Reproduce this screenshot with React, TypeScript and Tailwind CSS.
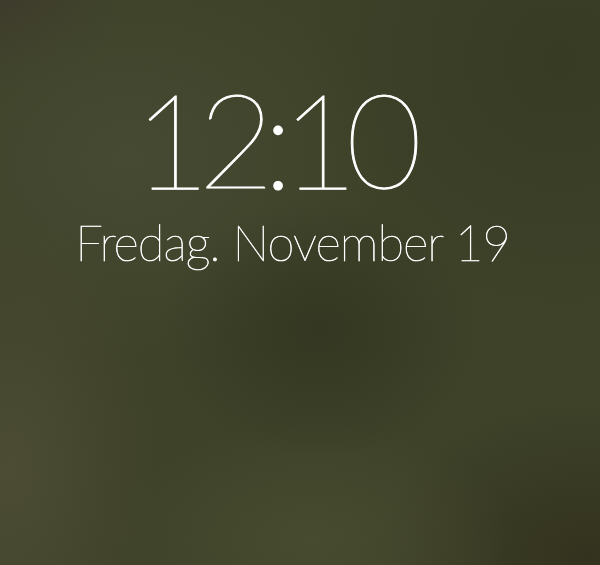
export default function App() {
  return (
    <div
      className="relative w-[600px] h-[565px] overflow-hidden bg-[#3e4229] bg-[radial-gradient(ellipse_160px_130px_at_320px_330px,#343721_0%,transparent_100%),radial-gradient(ellipse_150px_260px_at_10px_470px,#4b4c33_0%,transparent_100%),radial-gradient(ellipse_200px_120px_at_310px_540px,#474b2f_0%,transparent_100%),radial-gradient(ellipse_220px_160px_at_590px_560px,#33321e_0%,transparent_100%),radial-gradient(ellipse_260px_200px_at_130px_160px,#474a32_0%,transparent_100%),radial-gradient(ellipse_260px_260px_at_560px_60px,#383b24_0%,transparent_100%),radial-gradient(ellipse_120px_90px_at_0px_0px,#3d3a2c_0%,transparent_100%)]"
      style={{ fontFamily: "Lato, 'Liberation Sans', sans-serif" }}
    >
      <div className="flex flex-col items-center w-[576px] pt-[63px] text-white">
        <div className="text-[132px] leading-[150px] font-extralight tracking-[-12px] ml-[-32px] [-webkit-text-stroke:1px_white]">
          12:10
        </div>
        <div className="mt-[-1px] ml-[9px] text-[49px] leading-[60px] font-extralight tracking-[-1px] [-webkit-text-stroke:0.6px_white]">
          Fredag. November 19
        </div>
      </div>
    </div>
  );
}
